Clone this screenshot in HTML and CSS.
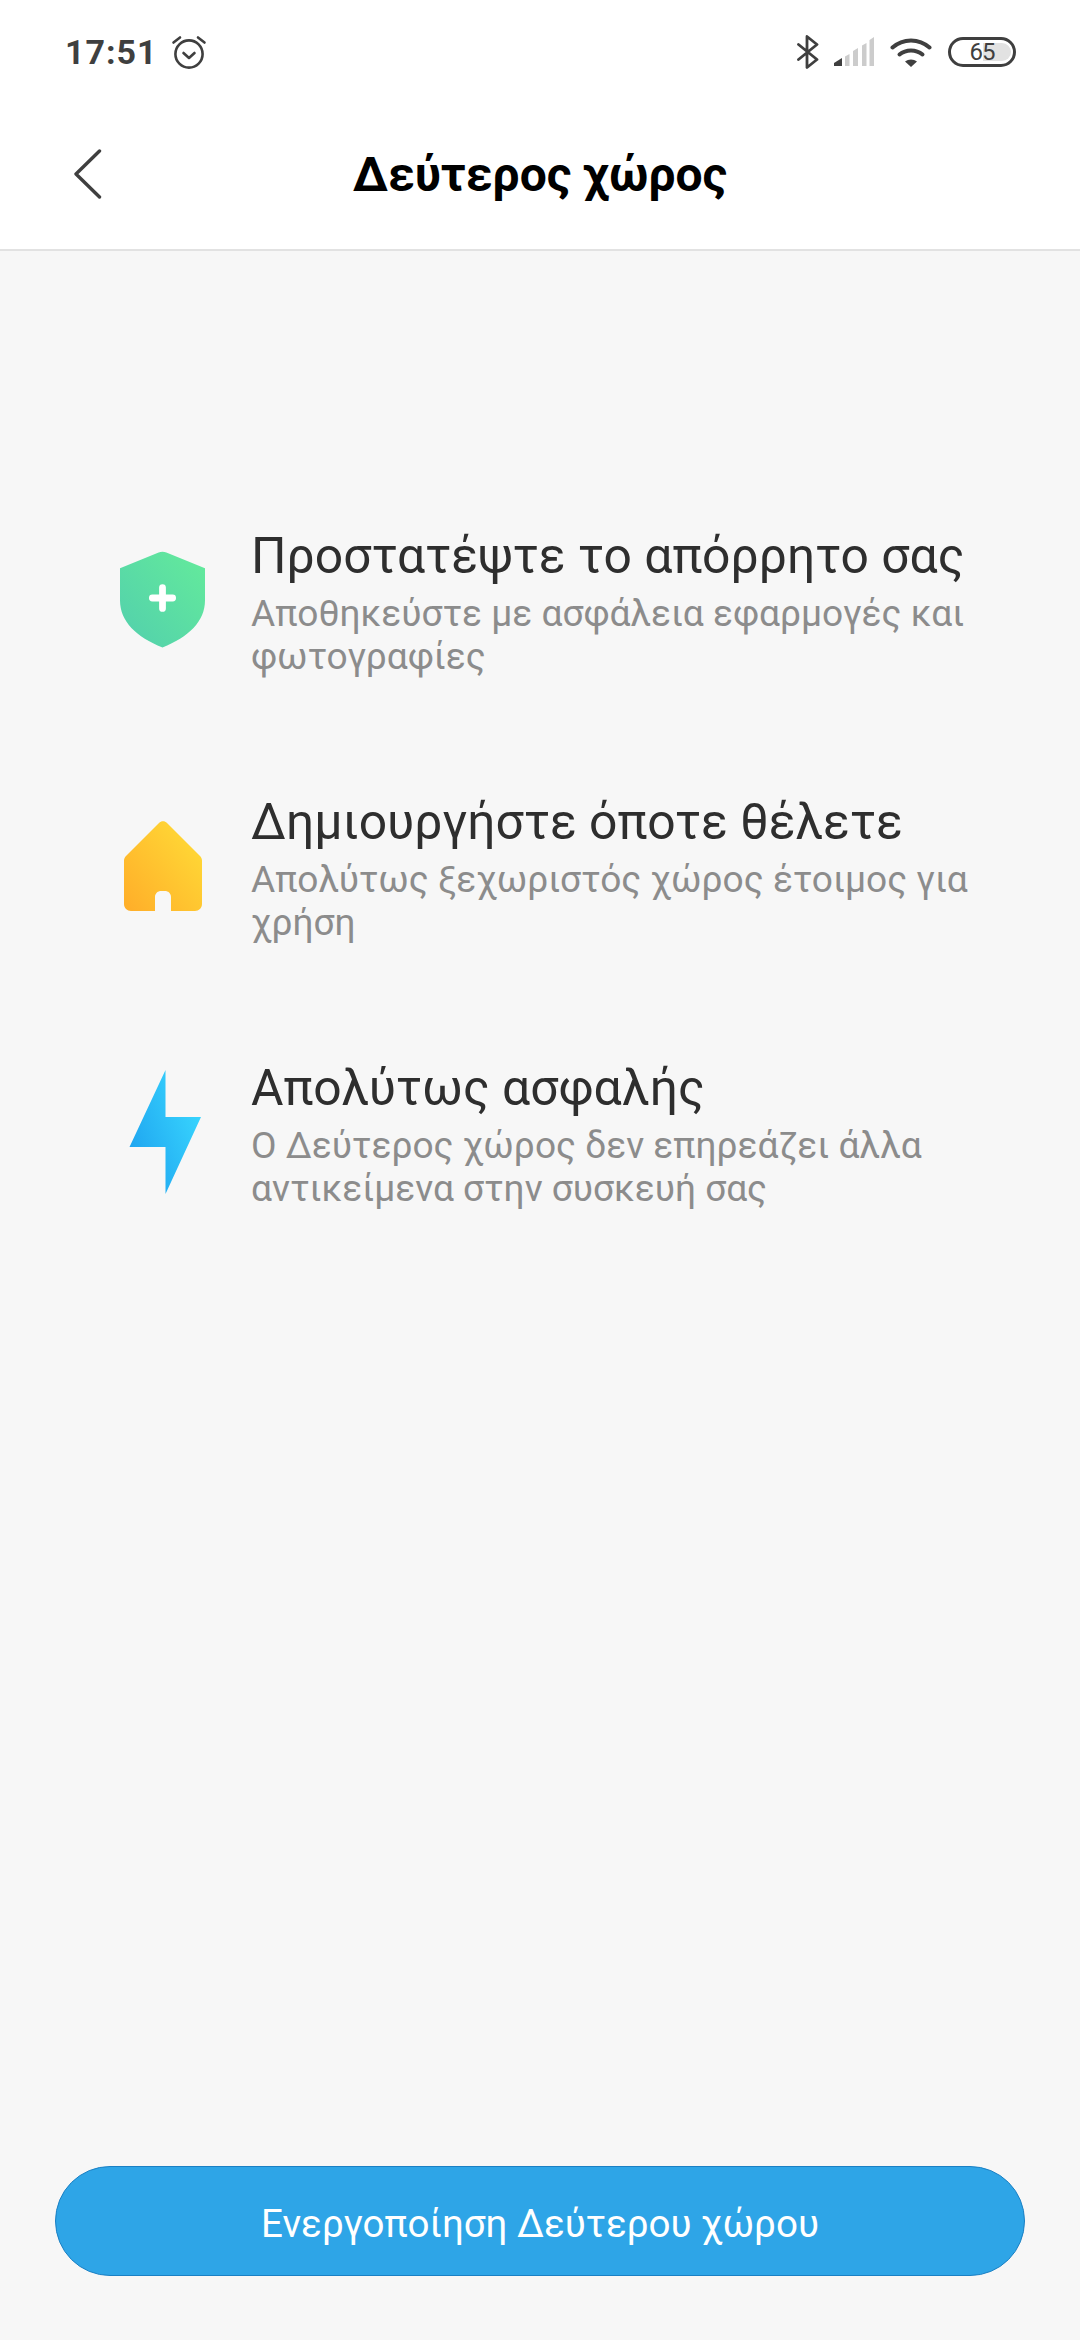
FILE: index.html
```html
<!DOCTYPE html>
<html lang="el">
<head>
  <meta charset="UTF-8">
  <meta name="viewport" content="width=device-width, initial-scale=1.0">
  <title>Δεύτερος χώρος</title>
  <link rel="stylesheet" href="styles.css">
</head>
<body>
  <header class="top">
    <div class="status-bar">
      <div class="status-left">
        <span class="clock">17:51</span>
        <svg class="alarm" width="36" height="36" viewBox="0 0 36 36" fill="none" stroke="#3f3f3f" stroke-width="2.6" stroke-linecap="round" stroke-linejoin="round">
          <circle cx="18" cy="20" r="13.6"/>
          <path d="M12.5 19l5.5 5 5.500-5"/>
          <path d="M2.500 8.500L9 3.500"/>
          <path d="M33.500 8.500L27 3.500"/>
        </svg>
      </div>
      <div class="status-right">
        <svg class="bt" width="22" height="34" viewBox="0 0 22 34" fill="none" stroke="#3f3f3f" stroke-width="2.800" stroke-linejoin="round" stroke-linecap="round">
          <path d="M1.500 9.500L20 24.500 10 32.500V1.500l10 8L1.500 24.500"/>
        </svg>
        <svg class="signal" width="40" height="30" viewBox="0 0 40 30">
          <path d="M0 29v-3L8 21v8z" fill="#3f3f3f"/>
          <path d="M11 29V19.500L15.500 17V29zM19 29V14l5-3V29zM28 29V8.500L32.500 6V29zM35.500 29V3L40 0V29z" fill="#cccccc"/>
        </svg>
        <svg class="wifi" width="42" height="30" viewBox="0 0 42 30" fill="none" stroke="#3f3f3f" stroke-width="4" stroke-linecap="round">
          <path d="M2.500 10.500C13 1 29 1 39.500 10.500"/>
          <path d="M9.500 17.500C16 12 26 12 32.500 17.500"/>
          <path d="M21 30l-6-5.500c3.500-2.800 8.500-2.800 12 0z" fill="#3f3f3f" stroke="none"/>
        </svg>
        <div class="battery">
          <div class="battery-fill"></div>
          <span class="battery-num">65</span>
        </div>
      </div>
    </div>
    <div class="title-bar">
      <svg class="back" width="28" height="50" viewBox="0 0 28 50" fill="none" stroke="#3f3f3f" stroke-width="3.400" stroke-linecap="round" stroke-linejoin="round">
        <path d="M25.500 2L2 25l23.500 23"/>
      </svg>
      <h1>Δεύτερος χώρος</h1>
    </div>
  </header>

  <main class="content">
    <ul class="features">
      <li class="feature">
        <div class="feature-icon">
          <svg width="85" height="97" viewBox="0 0 88 98" preserveAspectRatio="none">
            <defs>
              <linearGradient id="shieldGrad" x1="1" y1="0" x2="0" y2="1">
                <stop offset="0" stop-color="#64eb9b"/>
                <stop offset="1" stop-color="#52cfad"/>
              </linearGradient>
            </defs>
            <path d="M0 17.500L40 1.500c2.500-1 5.500-1 8 0l40 16V50c0 21-17 37-44 47.500C17 87 0 71 0 50z" fill="url(#shieldGrad)"/>
            <path d="M44 37v21M33.500 47.500h21" stroke="#fff" stroke-width="7" stroke-linecap="round"/>
          </svg>
        </div>
        <div class="feature-text">
          <h2>Προστατέψτε το απόρρητο σας</h2>
          <p>Αποθηκεύστε με ασφάλεια εφαρμογές και φωτογραφίες</p>
        </div>
      </li>
      <li class="feature">
        <div class="feature-icon">
          <svg width="78" height="90" viewBox="0 0 78 90">
            <defs>
              <linearGradient id="houseGrad" x1="1" y1="0.100" x2="0" y2="1">
                <stop offset="0" stop-color="#ffdc37"/>
                <stop offset="1" stop-color="#ffad29"/>
              </linearGradient>
            </defs>
            <path d="M35 2c2.200-2.200 5.800-2.200 8 0l33 33c1.300 1.300 2 3 2 4.800V83c0 3.900-3.100 7-7 7H47V76c0-3.900-3.100-6-6-6h-4c-2.900 0-6 2.100-6 6v14H7c-3.900 0-7-3.100-7-7V39.800c0-1.800.7-3.500 2-4.800z" fill="url(#houseGrad)"/>
          </svg>
        </div>
        <div class="feature-text">
          <h2>Δημιουργήστε όποτε θέλετε</h2>
          <p>Απολύτως ξεχωριστός χώρος έτοιμος για χρήση</p>
        </div>
      </li>
      <li class="feature">
        <div class="feature-icon">
          <svg width="76" height="124" viewBox="0 0 76 124">
            <defs>
              <linearGradient id="boltGrad" x1="1" y1="0.200" x2="0.100" y2="0.800">
                <stop offset="0" stop-color="#3ad9ff"/>
                <stop offset="1" stop-color="#1fa5f0"/>
              </linearGradient>
            </defs>
            <path d="M40.500 0v47H76L40.500 124V77H4.500z" fill="url(#boltGrad)"/>
          </svg>
        </div>
        <div class="feature-text">
          <h2>Απολύτως ασφαλής</h2>
          <p>Ο Δεύτερος χώρος δεν επηρεάζει άλλα αντικείμενα στην συσκευή σας</p>
        </div>
      </li>
    </ul>
    <button class="enable-btn">Ενεργοποίηση Δεύτερου χώρου</button>
  </main>
</body>
</html>
```

FILE: styles.css
```css
html, body {
  margin: 0;
  padding: 0;
  height: 100%;
}

body {
  display: flex;
  flex-direction: column;
  font-family: 'Roboto', 'Noto Sans', sans-serif;
  background-color: #f7f7f7;
  color: #2e2e2e;
}

.top {
  background-color: #ffffff;
  border-bottom: 2px solid #e2e2e2;
  height: 249px;
}

.status-bar {
  display: flex;
  justify-content: space-between;
  align-items: center;
  height: 104px;
  padding: 0 64px 0 65px;
}

.status-left,
.status-right {
  display: flex;
  align-items: center;
}

.clock {
  font-size: 34px;
  font-weight: 700;
  color: #3f3f3f;
  letter-spacing: 1px;
}

.alarm {
  margin-left: 13px;
}

.bt {
  margin-right: 15px;
}

.signal {
  margin-right: 16px;
}

.wifi {
  margin-right: 16px;
}

.battery {
  position: relative;
  box-sizing: border-box;
  width: 68px;
  height: 30px;
  border: 3px solid #3f3f3f;
  border-radius: 15px;
  overflow: hidden;
  text-align: center;
}

.battery-fill {
  position: absolute;
  top: 3px;
  bottom: 3px;
  right: 2px;
  width: 28px;
  background-color: #e2e2e2;
  border-radius: 0 10px 10px 0;
}

.battery-num {
  position: relative;
  font-size: 24px;
  letter-spacing: -1px;
  line-height: 24px;
  color: #3f3f3f;
}

.title-bar {
  position: relative;
  display: flex;
  justify-content: center;
  align-items: center;
  height: 144px;
}

.title-bar h1 {
  margin: 0 0 4px 0;
  font-size: 48px;
  font-weight: 700;
  color: #000000;
}

.back {
  position: absolute;
  left: 74px;
  top: 45px;
}

.content {
  flex: 1;
  display: flex;
  flex-direction: column;
  justify-content: space-between;
  padding: 270px 55px 64px;
}

.features {
  list-style: none;
  margin: 0;
  padding: 0;
  display: flex;
  flex-direction: column;
  gap: 109px;
}

.feature {
  display: flex;
  align-items: center;
}

.feature-icon {
  flex: none;
  width: 111px;
  margin-left: 52px;
  margin-right: 33px;
  display: flex;
  justify-content: center;
}

.feature-text h2 {
  margin: 0 0 1px 0;
  font-size: 49.800px;
  font-weight: 400;
  line-height: 70px;
  color: #2e2e2e;
}

.feature-text p {
  margin: 0;
  font-size: 37.100px;
  line-height: 43px;
  color: #8c8c8c;
}

.enable-btn {
  display: block;
  width: 100%;
  height: 110px;
  padding: 4px 0 0 0;
  border: 1px solid #1a80c4;
  border-radius: 55px;
  background-color: #2ea5e7;
  color: #ffffff;
  font-family: inherit;
  font-size: 38.500px;
}
```
